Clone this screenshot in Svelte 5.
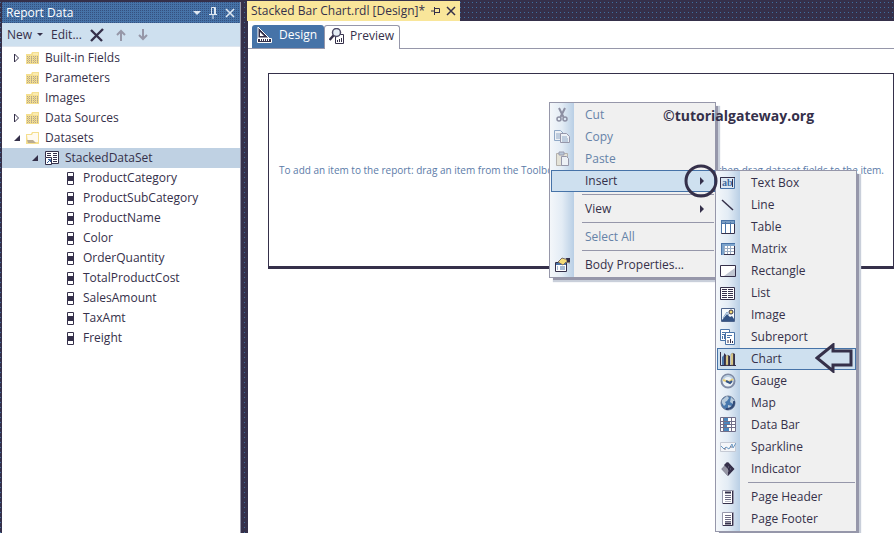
<script>
  const groups = [
    { label: 'Built-in Fields', state: 'closed' },
    { label: 'Parameters', state: 'leaf' },
    { label: 'Images', state: 'leaf' },
    { label: 'Data Sources', state: 'closed' },
    { label: 'Datasets', state: 'open' }
  ];
  const fields = [
    'ProductCategory', 'ProductSubCategory', 'ProductName', 'Color', 'OrderQuantity',
    'TotalProductCost', 'SalesAmount', 'TaxAmt', 'Freight'
  ];
  const mainMenu = [
    { label: 'Cut', icon: 'cut', disabled: true },
    { label: 'Copy', icon: 'copy', disabled: true },
    { label: 'Paste', icon: 'paste', disabled: true },
    { label: 'Insert', active: true, sub: true },
    null,
    { label: 'View', sub: true },
    null,
    { label: 'Select All', disabled: true },
    null,
    { label: 'Body Properties...', icon: 'props' }
  ];
  const insertMenu = [
    { label: 'Text Box', icon: 'textbox' },
    { label: 'Line', icon: 'line' },
    { label: 'Table', icon: 'table' },
    { label: 'Matrix', icon: 'matrix' },
    { label: 'Rectangle', icon: 'rect' },
    { label: 'List', icon: 'list' },
    { label: 'Image', icon: 'image' },
    { label: 'Subreport', icon: 'subreport' },
    { label: 'Chart', icon: 'chart', active: true },
    { label: 'Gauge', icon: 'gauge' },
    { label: 'Map', icon: 'map' },
    { label: 'Data Bar', icon: 'databar' },
    { label: 'Sparkline', icon: 'spark' },
    { label: 'Indicator', icon: 'indicator' },
    null,
    { label: 'Page Header', icon: 'header' },
    { label: 'Page Footer', icon: 'footer' }
  ];
</script>

{#snippet icon(name)}
  <svg class="icon" width="16" height="16" viewBox="0 0 16 16" aria-hidden="true">
    {#if name === 'cut'}
      <path d="M5 1L9.500 10M11 1L6.500 10" stroke="#8c8fa3" stroke-width="2" fill="none" />
      <circle cx="5" cy="12" r="2" fill="none" stroke="#8c8fa3" stroke-width="1.500" />
      <circle cx="11" cy="12" r="2" fill="none" stroke="#8c8fa3" stroke-width="1.500" />
    {:else if name === 'copy'}
      <path d="M.5 1.500h6l3 3v7h-9z" fill="#edf1f6" stroke="#8fa8c6" />
      <path d="M2 5h4M2 7h4M2 9h4" stroke="#8fa8c6" />
      <path d="M6.500 4.500h6l3 3v6h-9z" fill="#edf1f6" stroke="#9697aa" />
      <path d="M8 8h5M8 10h6M8 12h6" stroke="#8fa8c6" />
    {:else if name === 'paste'}
      <path d="M2.500 2.500h11v12h-11z" fill="#e4e3d8" stroke="#b4b1ad" />
      <path d="M5 1h5v3H5z" fill="#b9c8da" stroke="#9b9daf" />
      <path d="M7.500 5.500h5l2 2v7h-7z" fill="#edf1f6" stroke="#9697aa" />
    {:else if name === 'props'}
      <path d="M1.500 5.500h11v9h-11z" fill="#fff" stroke="#35304a" />
      <path d="M2 6h10v2H2z" fill="#4a74a8" />
      <path d="M3 10h1M3 12h1M6 10h5M6 12h5" stroke="#4a74a8" />
      <path d="M4 5l4-4 3 1h5v4l-4-1-3 3z" fill="#f5dc76" stroke="#796d66" />
      <path d="M12 1h4v4h-3z" fill="#35304a" />
    {:else if name === 'textbox'}
      <path d="M14.500 2.500H.5v11h14z" fill="#dce8f3" stroke="#4a74a8" />
      <path d="M.5 13V2.500H15" fill="none" stroke="#35304a" />
      <text x="2" y="11" class="glyph">ab</text>
      <path d="M12.500 4v8" stroke="#35304a" />
    {:else if name === 'line'}
      <path d="M2 3l11 10" stroke="#35304a" stroke-width="1.500" />
    {:else if name === 'table'}
      <path d="M1.500 1.500h13v13h-13z" fill="#fff" stroke="#35304a" />
      <path d="M1 1h14v4H1z" fill="#4a74a8" />
      <path d="M2 3h12" stroke="#a7c4df" />
      <path d="M5.500 3v11M10.500 3v11M1.500 3v11" stroke="#4a74a8" />
    {:else if name === 'matrix'}
      <path d="M1.500 2.500h13v11h-13z" fill="#fff" stroke="#35304a" />
      <path d="M1 2h14v3H1zM1 2h3v12H1z" fill="#7da4cc" />
      <path d="M1 2.500h14M1.500 2v12" stroke="#4a74a8" />
      <path d="M4.500 5v8M7.500 5v8M10.500 5v8M4 7.500h10M4 10.500h10" stroke="#9badc4" />
    {:else if name === 'rect'}
      <path d="M.5 2.500h15v11H.5z" fill="#fff" stroke="#35304a" />
      <path d="M15 5v8H4z" fill="#c0c6d1" />
    {:else if name === 'list'}
      <path d="M.5 2.500h14v12H.5z" fill="#fff" stroke="#35304a" />
      <path d="M2 4.500h5M2 6.500h5M2 8.500h5M2 10.500h5M2 12.500h5M8 4.500h5M8 6.500h5M8 8.500h5M8 10.500h5M8 12.500h5" stroke="#35304a" />
    {:else if name === 'image'}
      <path d="M1.500 1.500h13v13h-13z" fill="#f6f9fc" stroke="#4c638b" />
      <path d="M2 13l5-6 3 3 2-1 2 3v2H2z" fill="#355485" />
      <path d="M3 11l4-6 2 3" fill="none" stroke="#83a5c9" />
      <circle cx="11" cy="5" r="2" fill="#f5dc76" stroke="#35304a" />
    {:else if name === 'subreport'}
      <path d="M.5.5h9v11h-9z" fill="#fff" stroke="#4a74a8" />
      <path d="M2 3.500h5M2 5.500h3M2.500 10V7M4.500 10V6" stroke="#4a74a8" />
      <path d="M5.500 3.500h9v12h-9z" fill="#fff" stroke="#4a74a8" />
      <path d="M7 6.500h5M7 8.500h3" stroke="#4a74a8" />
      <path d="M8 14v-3M10.500 14v-4M12.500 14v-2" stroke="#35304a" />
    {:else if name === 'chart'}
      <path d="M.5 1v13.500H16" fill="none" stroke="#35304a" />
      <path d="M2 6l2-2v10H2z" fill="#4a74a8" />
      <path d="M4 2l2 2v10H4zM8 4l2 1v9H8zM13 2l2 1v11h-2z" fill="#35304a" />
      <path d="M6 5l2-1v10H6zM11 3l2-1v12h-2z" fill="#f2df91" stroke="#807763" stroke-width=".5" />
    {:else if name === 'gauge'}
      <circle cx="8" cy="8" r="6.500" fill="#edf3f8" stroke="#7f8ba5" stroke-width="2" />
      <path d="M3 8a5 5 0 0 1 10 0" fill="none" stroke="#bcd0e2" stroke-width="2" />
      <path d="M3 7l6 2 4-3" fill="none" stroke="#e9ce73" stroke-width="2" />
      <path d="M6 8l4 2 2-2" fill="none" stroke="#355485" stroke-width="2" />
    {:else if name === 'map'}
      <circle cx="8" cy="8" r="7" fill="#4878ad" stroke="#6b7892" />
      <path d="M2 5l5-4 2 2-2 3-2 1 1 2-2 2-2-3zM11 2l4 4-2 3-3-2zM8 10l4 1-2 4-2-1z" fill="#b8cbdc" />
      <path d="M14 6a7 7 0 0 1-8 8" fill="none" stroke="#334b77" stroke-width="2" />
    {:else if name === 'databar'}
      <path d="M.5.5h15v14H.5z" fill="#fff" stroke="#716e88" />
      <path d="M3.500 0v15M11.500 0v15M0 4.500h16M0 7.500h16M0 10.500h16" stroke="#716e88" />
      <path d="M4 1h4v3H4zM4 5h6v2H4zM4 8h3v2H4zM4 11h5v3H4z" fill="#4a86bd" />
    {:else if name === 'spark'}
      <path d="M.5 3.500h15v9H.5z" fill="#f4f6f9" stroke="#c5cad5" />
      <path d="M1 7l3 3 2-2 3 2 3-5 1 4 3-5" fill="none" stroke="#6b99c4" />
      <path d="M5 9v2M11 7v2" stroke="#777084" />
    {:else if name === 'indicator'}
      <path d="M8 1l6.500 7L8 15 1.500 8z" fill="#35304a" />
      <path d="M8 1v14L1.500 8z" fill="#9696a5" />
      <path d="M7 1l7 7-3 3-7-7z" fill="#35304a" />
      <path d="M8 6h1M10 8h1M8 10h1" stroke="#77758a" />
    {:else}
      <path d="M2.500 1.500h11v13h-11z" fill="#fff" stroke="#9697aa" />
      <path d="M12.500 2v12.500H3" fill="none" stroke="#35304a" />
      <path d="M5 6.500h6M5 8.500h6M5 10.500h6" stroke="#6d6b83" />
      {#if name === 'header'}
        <path d="M5 3.500h6" stroke="#35304a" stroke-width="2" /><path d="M5 12.500h6" stroke="#b5b7c4" />
      {:else}
        <path d="M5 4.500h6" stroke="#6d6b83" /><path d="M5 12.500h6" stroke="#35304a" stroke-width="2" />
      {/if}
    {/if}
  </svg>
{/snippet}

{#snippet menu(items)}
  {#each items as item}
    {#if item}
      <button class="item" class:active={item.active} disabled={item.disabled} role="menuitem">
        <span class="slot">{#if item.icon}{@render icon(item.icon)}{/if}</span>
        <span class="label">{item.label}</span>
        {#if item.sub}
          <svg width="5" height="8" viewBox="0 0 5 8" aria-hidden="true"><path d="M0 0l4 4-4 4z" fill="#35304a" /></svg>
        {/if}
      </button>
    {:else}
      <div class="sep" role="separator"></div>
    {/if}
  {/each}
{/snippet}

<div class="ide">
  <aside class="panel">
    <header class="title">
      <span class="grow">Report Data</span>
      <button aria-label="Window position"><svg width="8" height="4" viewBox="0 0 8 4"><path d="M0 0h8L4 4z" fill="#dfe8f2" /></svg></button>
      <button aria-label="Auto hide"><svg width="8" height="12" viewBox="0 0 8 12"><path d="M2.500 7V.5h4V7M0 7.500h8M4 8v4M5.500 1v6" fill="none" stroke="#dfe8f2" /></svg></button>
      <button aria-label="Close"><svg width="10" height="10" viewBox="0 0 10 10"><path d="M1 1l8 8M9 1L1 9" stroke="#dfe8f2" stroke-width="1.600" /></svg></button>
    </header>
    <div class="toolbar">
      <button class="new">New <svg width="6" height="3" viewBox="0 0 6 3" aria-hidden="true"><path d="M0 0h6L3 3z" fill="#35304a" /></svg></button>
      <button>Edit...</button>
      <button aria-label="Delete"><svg width="14" height="14" viewBox="0 0 14 14"><path d="M1 2l11 11M13 1L1 13" stroke="#35304a" stroke-width="2.400" /></svg></button>
      <button class="arrow" aria-label="Move up"><svg width="10" height="12" viewBox="0 0 10 12"><path d="M5 12V2M1 6l4-4 4 4" fill="none" stroke="#9697a8" stroke-width="2" /></svg></button>
      <button class="arrow" aria-label="Move down"><svg width="10" height="12" viewBox="0 0 10 12"><path d="M5 0v10M1 6l4 4 4-4" fill="none" stroke="#9697a8" stroke-width="2" /></svg></button>
    </div>
    <div class="tree" role="tree">
      {#each groups as g}
        <div class="row" role="treeitem" aria-selected="false">
          <svg class="twist" width="8" height="10" viewBox="0 0 8 10" aria-hidden="true">
            {#if g.state === 'closed'}<path d="M2.500 1l4 4-4 4z" fill="#fff" stroke="#35304a" />
            {:else if g.state === 'open'}<path d="M8 2v6H2z" fill="#35304a" />{/if}
          </svg>
          <svg width="13" height="12" viewBox="0 0 13 12" aria-hidden="true">
            <path d="M0 2h5l1-2h7v12H0z" fill="#f5df8e" />
            {#if g.state === 'open'}
              <path d="M1 3h5l1-2h5v9H2z" fill="#fffaf0" /><path d="M1 8h6l3 3H2z" fill="#b9ab91" />
            {:else}
              <path d="M1 4.500h11M1 6.500h11M1 8.500h11M1 10.500h11" stroke="#b3a68f" stroke-dasharray="1 1" />
              <path d="M2 5.500h11M2 7.500h11M2 9.500h11" stroke="#c9b88c" stroke-dasharray="1 2" />
              <path d="M7 2h5" stroke="#fff5cf" />
            {/if}
          </svg>
          <span>{g.label}</span>
        </div>
      {/each}
      <div class="row dataset" role="treeitem" aria-selected="true">
        <svg class="twist" width="8" height="10" viewBox="0 0 8 10" aria-hidden="true"><path d="M7 2v6H1z" fill="#35304a" /></svg>
        <svg width="14" height="14" viewBox="0 0 14 14" aria-hidden="true">
          <path d="M.5 6V.5h13v12H6" fill="#fff" stroke="#35304a" />
          <path d="M2 2.500h4M8 2.500h4M2 4.500h4M8 4.500h4M8 6.500h4M8 8.500h4M8 10.500h4" stroke="#35304a" />
          <path d="M.5 6.500h6v7h-6z" fill="#fff" stroke="#35304a" /><path d="M2 12l3-3M3 8.500h2.500V11" fill="none" stroke="#355f9b" />
        </svg>
        <span>StackedDataSet</span>
      </div>
      {#each fields as f}
        <div class="row field" role="treeitem" aria-selected="false">
          <svg width="7" height="13" viewBox="0 0 7 13" aria-hidden="true"><path d="M.5.5h6v12h-6z" fill="#fff" stroke="#35304a" /><path d="M0 4h7v5H0z" fill="#35304a" /></svg>
          <span>{f}</span>
        </div>
      {/each}
    </div>
  </aside>

  <main>
    <div class="doctabs">
      <div class="doc">
        <span>Stacked Bar Chart.rdl [Design]*</span>
        <button aria-label="Pin"><svg width="9" height="8" viewBox="0 0 9 8"><path d="M0 4h3M3.500 0v8M4 1.500h4.500v4H4M4 5.500h5" fill="none" stroke="#35304a" /></svg></button>
        <button aria-label="Close document"><svg width="10" height="10" viewBox="0 0 10 10"><path d="M1 1l8 8M9 1L1 9" stroke="#35304a" stroke-width="1.500" /></svg></button>
      </div>
    </div>
    <section class="editor">
      <nav class="views">
        <button class="view design">
          <svg width="15" height="16" viewBox="0 0 15 16" aria-hidden="true">
            <path d="M1 0l11 11H1z" fill="#35304a" stroke="#fff" /><path d="M3 5l4 4H3z" fill="#fff" />
            <path d="M.5 11.500h14v4H.5z" fill="#35304a" stroke="#fff" /><path d="M3.500 12v2M5.500 12v2M7.500 12v2M9.500 12v2M11.500 12v2" stroke="#fff" />
          </svg>
          Design
        </button>
        <button class="view preview">
          <svg width="15" height="16" viewBox="0 0 15 16" aria-hidden="true">
            <path d="M6.500 6.500h8v9h-8z" fill="#fff" stroke="#35304a" /><path d="M8.500 14v-2M10.500 14v-3M12.500 14v-4" stroke="#35304a" />
            <circle cx="7.500" cy="4.500" r="4" fill="#e4edf5" stroke="#4d4a66" stroke-width="1.500" /><path d="M4.500 7.500L.5 12" stroke="#35304a" stroke-width="2.500" />
          </svg>
          Preview
        </button>
      </nav>
      <div class="canvas">
        <div class="report">
          <span>To add an item to the report: drag an item from the Toolbox to</span>
          <span>then drag dataset fields to the item.</span>
        </div>
      </div>
    </section>
  </main>

  <div class="popup context" role="menu">{@render menu(mainMenu)}</div>
  <div class="popup insert" role="menu">{@render menu(insertMenu)}</div>
  <div class="credit">©tutorialgateway.org</div>
  <svg class="ring" width="34" height="34" viewBox="0 0 34 34" aria-hidden="true"><circle cx="17" cy="17" r="15" fill="none" stroke="#35304a" stroke-width="3" /></svg>
  <svg class="pointer" width="38" height="30" viewBox="0 0 38 30" aria-hidden="true"><path d="M2 15L18 2v6h18v14H18v6z" fill="#cfe0ef" stroke="#35304a" stroke-width="3" /></svg>
</div>

<style>
  :global(body) { margin: 0; background: #35304a; }
  .ide {
    --ink: #35304a; --blue: #4673a8; --line: #9697aa; --pale: #cee0ef;
    position: relative; display: flex; gap: 7px; box-sizing: border-box; min-height: 100vh; padding-left: 2px; overflow: hidden;
    font: 12px/20px "Open Sans", "Noto Sans", sans-serif; color: var(--ink);
    background: conic-gradient(at 1px 1px, transparent 75%, #3f6f9f 0) 0 2px / 4px 5px var(--ink);
  }
  button { margin: 0; padding: 0; border: 0; background: none; font: inherit; color: inherit; display: flex; align-items: center; }
  svg { display: block; flex: none; }
  .panel { flex: none; width: 239px; box-sizing: border-box; margin-top: 2px; background: #fff; border-right: 1px solid var(--line); }
  .title {
    display: flex; align-items: center; gap: 8px; height: 21px; padding: 0 5px 0 4px; color: #fff;
    background: conic-gradient(at 1px 1px, transparent 75%, #35507f 0) 0 0 / 2px 2px var(--blue);
  }
  .grow { flex: 1; }
  .toolbar { display: flex; align-items: center; gap: 8px; height: 24px; padding-left: 5px; background: var(--pale); border-bottom: 1px solid #dfe6ef; box-sizing: border-box; }
  .new { gap: 5px; }
  .arrow { margin-left: 4px; }
  .row { display: flex; align-items: center; gap: 6px; height: 20px; padding-left: 10px; white-space: nowrap; }
  .tree { padding-top: 1px; }
  .dataset { padding-left: 29px; background: #bfd1e3; }
  .field { padding-left: 65px; gap: 9px; }

  main { flex: 1; min-width: 0; display: flex; flex-direction: column; }
  .doctabs { display: flex; height: 21px; }
  .doc { display: flex; align-items: center; gap: 6px; margin: 1px 0 0 -1px; padding: 0 4px; background: #f9e69a; white-space: nowrap; }
  .editor { flex: 1; background: #fff; padding-top: 4px; }
  .views { display: flex; height: 23px; padding-left: 4px; border-bottom: 1px solid var(--line); }
  .view { gap: 7px; padding: 0 7px 3px 5px; height: 23px; box-sizing: border-box; border-radius: 3px 3px 0 0; }
  .design { background: var(--blue); color: #fff; }
  .preview { height: 24px; background: #fff; border: 1px solid var(--line); border-bottom: 0; gap: 6px; padding: 0 5px 4px 4px; }
  .canvas { padding: 24px 0 0 20px; }
  .report {
    display: flex; align-items: center; justify-content: space-between; height: 192px; padding: 0 9px 0 10px; overflow: hidden; white-space: nowrap;
    border: 1px solid var(--ink); border-bottom-width: 3px; font-size: 10px; color: #5b7ba8;
  }

  .popup {
    position: absolute; box-sizing: border-box; padding: 1px 0 1px 1px; border: 1px solid var(--line);
    background: linear-gradient(90deg, #f4f7fa, #e3ecf5 12px, #b9cfe5 24px, #f0f0f0 24px);
    box-shadow: 3px 3px 0 -1px var(--line), 4px 4px 1px #c9cfda;
  }
  .context { left: 549px; top: 102px; width: 167px; }
  .insert { left: 715px; top: 170px; width: 142px; }
  .item { display: flex; box-sizing: border-box; width: 100%; height: 22px; border: 1px solid transparent; padding-right: 9px; text-align: left; }
  .item:disabled { color: #6683a8; }
  .active { background: var(--pale); border-color: var(--blue); }
  .slot { width: 33px; flex: none; padding-left: 2px; box-sizing: border-box; }
  .label { flex: 1; white-space: nowrap; }
  .sep { height: 1px; margin: 2px 1px 3px 31px; background: var(--line); }
  .glyph { font: bold 10px "Liberation Serif", serif; fill: #3f6b9f; }
  .credit { position: absolute; left: 663px; top: 106px; font-weight: 700; font-size: 14px; }
  .ring { position: absolute; left: 684px; top: 164px; }
  .pointer { position: absolute; left: 815px; top: 343px; }
</style>
